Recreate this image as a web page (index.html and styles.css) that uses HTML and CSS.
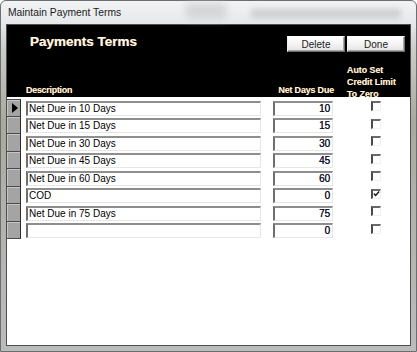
FILE: index.html
```html
<!DOCTYPE html>
<html>
<head>
<meta charset="utf-8">
<link rel="stylesheet" href="styles.css">
</head>
<body>
<div class="window">
  <div class="titlebar">
    <span class="title">Maintain Payment Terms</span>
    <div class="glass"><span class="blur1"></span><span class="blur2"></span></div>
  </div>
  <div class="client">
    <div class="header">
      <div class="toprow">
        <h1 class="heading">Payments Terms</h1>
        <div class="buttons">
          <button class="btn">Delete</button>
          <button class="btn">Done</button>
        </div>
      </div>
      <div class="colheads">
        <span class="ch-sel"></span>
        <span class="ch-desc">Description</span>
        <span class="ch-net">Net Days Due</span>
        <span class="ch-auto">Auto Set<br>Credit Limit<br>To Zero</span>
      </div>
    </div>
    <div class="rows">
      <div class="row current"><span class="sel"><span class="arrow"></span></span><span class="tb desc">Net Due in 10 Days</span><span class="tb net">10</span><span class="chk"></span></div>
      <div class="row"><span class="sel"></span><span class="tb desc">Net Due in 15 Days</span><span class="tb net">15</span><span class="chk"></span></div>
      <div class="row"><span class="sel"></span><span class="tb desc">Net Due in 30 Days</span><span class="tb net">30</span><span class="chk"></span></div>
      <div class="row"><span class="sel"></span><span class="tb desc">Net Due in 45 Days</span><span class="tb net">45</span><span class="chk"></span></div>
      <div class="row"><span class="sel"></span><span class="tb desc">Net Due in 60 Days</span><span class="tb net">60</span><span class="chk"></span></div>
      <div class="row"><span class="sel"></span><span class="tb desc">COD</span><span class="tb net">0</span><span class="chk checked"><svg width="8" height="8" viewBox="0 0 8 8"><path d="M1 3.5 L3 5.6 L7 1.2" fill="none" stroke="#111" stroke-width="1.6"/></svg></span></div>
      <div class="row"><span class="sel"></span><span class="tb desc">Net Due in 75 Days</span><span class="tb net">75</span><span class="chk"></span></div>
      <div class="row"><span class="sel"></span><span class="tb desc"></span><span class="tb net">0</span><span class="chk"></span></div>
    </div>
  </div>
</div>
</body>
</html>
```

FILE: styles.css
```css
html, body {
  margin: 0;
  padding: 0;
  background: #ffffff;
}

.window {
  width: 417px;
  height: 352px;
  box-sizing: border-box;
  border: 1px solid #6b6f72;
  border-radius: 6px 6px 0 0;
  padding: 0 5px 5px 5px;
  background: linear-gradient(to bottom, #f2f3f5 0px, #e6e8eb 22px, #c9cbc6 50px, #a9aa9c 120px, #b2b3ac 220px, #bcbcbc 352px);
  display: flex;
  flex-direction: column;
  font-family: "Liberation Sans", Arial, sans-serif;
}

.titlebar {
  height: 23px;
  position: relative;
  display: flex;
  align-items: center;
}

.title {
  font-size: 10.3px;
  color: #1b1b1b;
  padding-left: 2px;
  position: relative;
  z-index: 1;
}

.glass {
  position: absolute;
  left: 120px;
  top: 0;
  right: 0;
  height: 23px;
}

.blur1 {
  position: absolute;
  left: 60px;
  top: 2px;
  width: 40px;
  height: 16px;
  background: #c9cbcd;
  filter: blur(4px);
  opacity: 0.7;
}

.blur2 {
  position: absolute;
  left: 125px;
  top: 8px;
  width: 150px;
  height: 9px;
  background: #c4c6c8;
  filter: blur(3px);
  opacity: 0.8;
}

.client {
  flex: 1;
  border: 1px solid #4c4f52;
  background: #ffffff;
  display: flex;
  flex-direction: column;
}

.header {
  height: 72px;
  background: #000000;
  display: flex;
  flex-direction: column;
  justify-content: space-between;
}

.toprow {
  display: flex;
  justify-content: space-between;
  align-items: flex-start;
  padding: 11px 5px 0 23px;
}

.heading {
  margin: 0;
  font-size: 13.5px;
  font-weight: bold;
  line-height: 14px;
  margin-top: -1px;
  color: #fff8e2;
  text-shadow: -0.5px 0 0 rgba(255, 150, 40, 0.55), 0.5px 0 0 rgba(120, 170, 255, 0.4);
}

.buttons {
  display: flex;
  gap: 2px;
}

.btn {
  width: 58px;
  height: 16px;
  padding: 0;
  margin: 0;
  font-family: "Liberation Sans", Arial, sans-serif;
  font-size: 10px;
  color: #1a1a1a;
  background: linear-gradient(to bottom, #ffffff 0%, #f4f4f4 50%, #e2e2e2 100%);
  border: 1px solid;
  border-color: #ffffff #6e6e6e #6e6e6e #f0f0f0;
  box-shadow: inset -1px -1px 0 #a8a8a8;
  line-height: 13px;
}

.colheads {
  display: grid;
  grid-template-columns: 19px 236px 12px 60px 13px 58px;
  align-items: end;
  font-size: 9px;
  font-weight: bold;
  color: #fff8e2;
  line-height: 12px;
  margin-bottom: -3px;
  text-shadow: -0.4px 0 0 rgba(255, 150, 40, 0.5);
}

.ch-desc {
  grid-column: 2;
  letter-spacing: -0.3px;
  padding-bottom: 4px;
}

.ch-net {
  grid-column: 4;
  text-align: right;
  letter-spacing: -0.2px;
  padding-bottom: 4px;
}

.ch-auto {
  grid-column: 6;
  letter-spacing: -0.1px;
  white-space: nowrap;
}

.rows {
  padding-top: 2px;
  display: flex;
  flex-direction: column;
}

.row {
  height: 17.5px;
  display: flex;
  align-items: flex-start;
}

.sel {
  width: 14px;
  height: 17.5px;
  box-sizing: border-box;
  background: #a4a4a4;
  border-right: 1px solid #2e2e2e;
  border-bottom: 1px solid #4a4a4a;
  box-shadow: inset 1px 1px 0 #c6c6c6;
  display: flex;
  align-items: center;
  justify-content: center;
  flex: none;
}

.row:first-child .sel {
  border-top: 1px solid #4a4a4a;
}

.arrow {
  width: 0;
  height: 0;
  border-top: 5px solid transparent;
  border-bottom: 5px solid transparent;
  border-left: 6px solid #000000;
  margin-left: 2px;
}

.tb {
  height: 15px;
  box-sizing: border-box;
  margin-top: 1.5px;
  border-style: solid;
  border-width: 2px 1px 1px 2px;
  border-color: #8e8e8e #e6e6e6 #e6e6e6 #6f6f6f;
  font-size: 10px;
  line-height: 12px;
  color: #000000;
  white-space: nowrap;
  overflow: hidden;
  flex: none;
}

.desc {
  width: 235px;
  margin-left: 5px;
  padding-left: 1px;
}

.net {
  width: 60px;
  margin-left: 12px;
  text-align: right;
  padding-right: 2px;
  font-size: 10px;
  color: #14142a;
  text-shadow: 0.35px 0 0 #14142a;
}

.chk {
  width: 10px;
  height: 10px;
  box-sizing: border-box;
  margin-left: 38px;
  margin-top: 2px;
  border-style: solid;
  border-width: 2px 1px 1px 2px;
  border-color: #6a6a6a #f0f0f0 #f0f0f0 #4a4a4a;
  background: #ffffff;
  display: flex;
  align-items: center;
  justify-content: center;
  flex: none;
}

.chk svg {
  display: block;
}
```
